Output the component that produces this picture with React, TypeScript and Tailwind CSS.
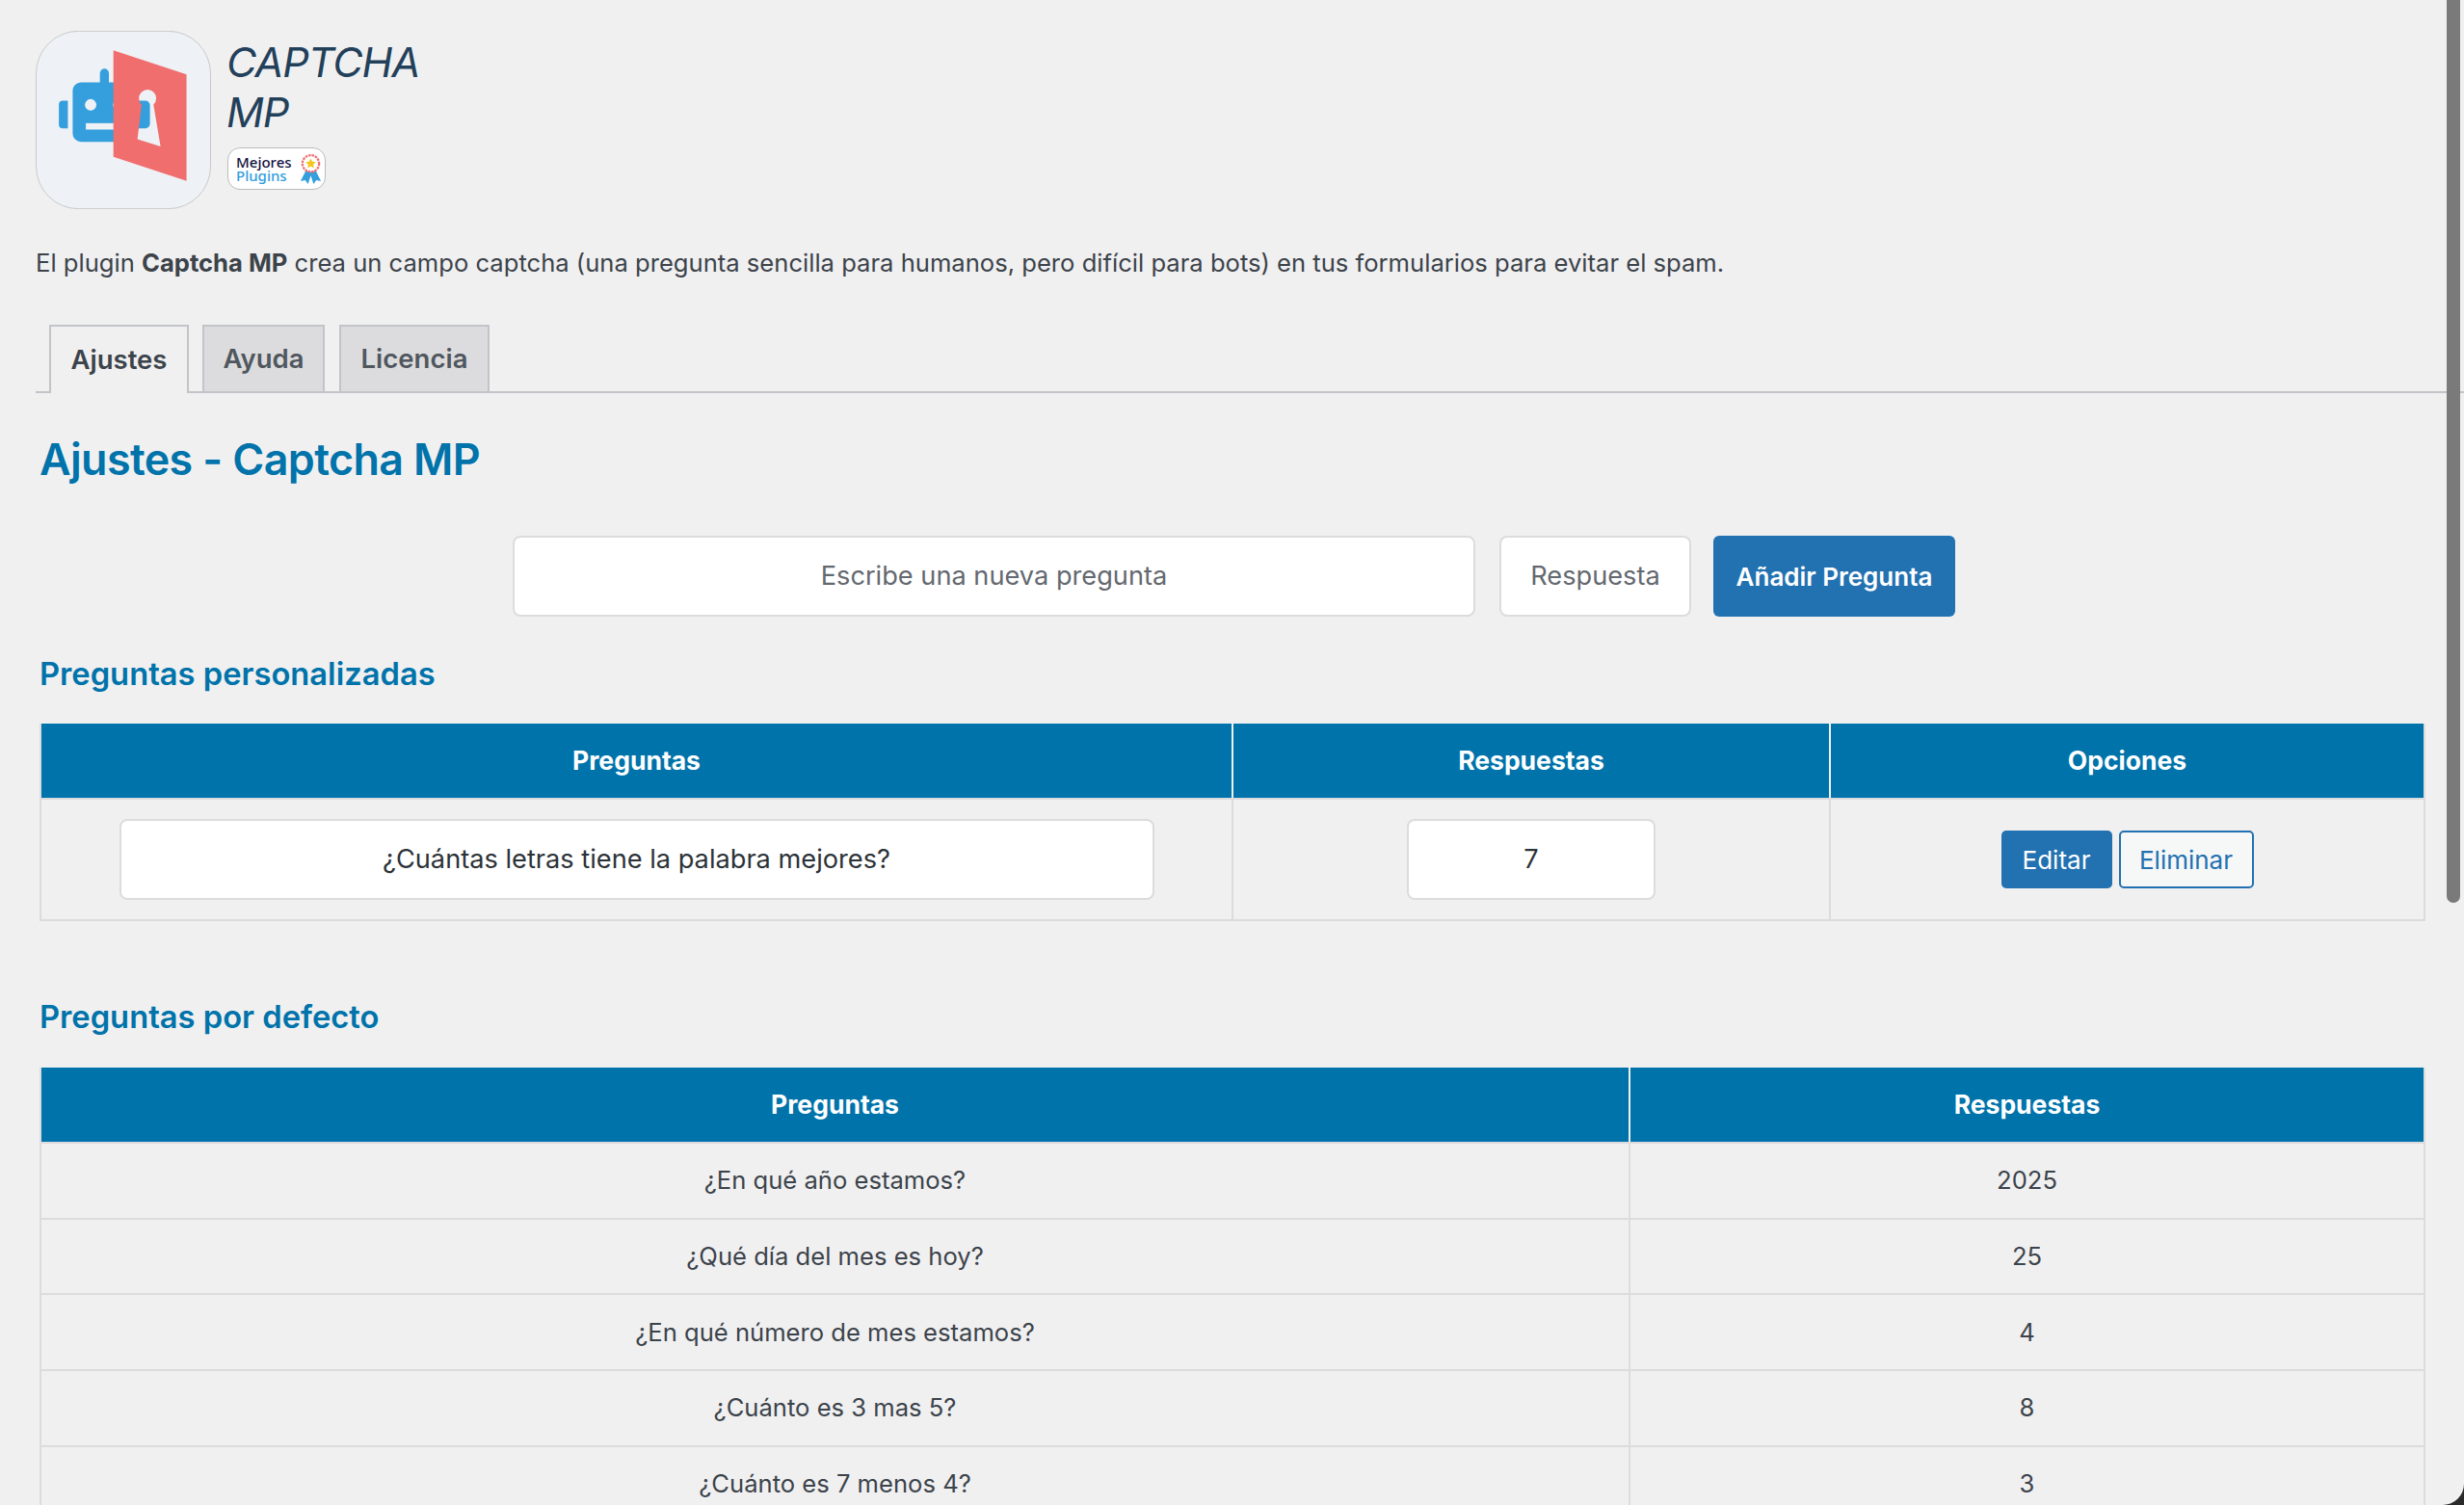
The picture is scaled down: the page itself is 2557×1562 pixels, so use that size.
const Logo = () => (
  <svg viewBox="22 22 546 556" className="w-[182px] h-[185px] shrink-0">
    <rect x="23" y="23" width="544" height="554" rx="132" fill="#eef1f5" stroke="#b5b5b5" strokeWidth="2" />
    <rect x="222" y="140" width="28" height="70" rx="14" fill="#349fdc" />
    <path d="M122 240 H106 a12 12 0 0 0 -12 12 V314 a12 12 0 0 0 12 12 H122 Z" fill="#349fdc" />
    <path d="M340 240 H364 a14 14 0 0 1 14 14 V312 a14 14 0 0 1 -14 14 H340 Z" fill="#349fdc" />
    <rect x="137" y="183" width="190" height="185" rx="26" fill="#349fdc" />
    <circle cx="193" cy="253" r="18" fill="#eef1f5" />
    <circle cx="281" cy="253" r="18" fill="#eef1f5" />
    <rect x="178" y="310" width="120" height="20" fill="#eef1f5" />
    <path
      fillRule="evenodd"
      d="M264 83 L492 158 V490 L264 415 Z M352 252 A27 27 0 1 1 389 252 L411 383 L339 360 Z"
      fill="#f06e6e"
    />
  </svg>
);

const Ribbon = () => (
  <svg viewBox="0 0 26 34" className="w-[25px] h-[33px] shrink-0">
    <path d="M8 18 L2 30 L7 29 L10 33 L13 24 L16 33 L19 29 L24 30 L18 18 Z" fill="#349fdc" />
    <circle cx="13" cy="11" r="9" fill="#fff" stroke="#f06e6e" strokeWidth="2.4" strokeDasharray="2.6 1" />
    <path d="M13 5.5 L14.7 9 L18.5 9.5 L15.7 12.1 L16.4 15.9 L13 14 L9.6 15.9 L10.3 12.1 L7.5 9.5 L11.3 9 Z" fill="#f5c518" />
  </svg>
);

const Tab = ({ label, active }: { label: string; active?: boolean }) => (
  <div
    className={
      active
        ? "w-[145px] h-[71px] -mb-[2px] border-2 border-b-0 border-[#c3c4c7] bg-[#f0f0f1] text-[#3c434a] flex items-center justify-center text-[27.5px] font-semibold leading-none"
        : "h-[71px] -mb-[2px] border-2 border-[#c3c4c7] bg-[#dcdcde] text-[#50575e] flex items-center justify-center text-[27.5px] font-semibold leading-none"
    }
  >
    {label}
  </div>
);

const Th = ({ children, className = "" }: { children: string; className?: string }) => (
  <div className={"bg-[#0073aa] text-white font-bold text-[26.5px] flex items-center justify-center h-[77px] " + className}>{children}</div>
);

const field =
  "bg-white border-2 border-[#dcdcde] rounded-[8px] h-[84px] flex items-center justify-center text-[27.2px] ";

const defaults = [
  ["¿En qué año estamos?", "2025"],
  ["¿Qué día del mes es hoy?", "25"],
  ["¿En qué número de mes estamos?", "4"],
  ["¿Cuánto es 3 mas 5?", "8"],
  ["¿Cuánto es 7 menos 4?", "3"],
];

export default function App() {
  return (
    <div className="bg-[#2a2a2a] w-[2557px] h-[1562px] overflow-hidden">
      <div className="relative bg-[#f0f0f1] w-full h-full rounded-br-[22px] overflow-hidden text-[#3c434a] font-['Inter',sans-serif]">
        <div className="absolute right-[4px] top-0 w-[14px] h-[937px] bg-[#7a7a7a] rounded-b-[7px]" />

        <div className="flex pl-[37px] pt-[32px] gap-[16px]">
          <Logo />
          <div className="flex flex-col pt-[6px]">
            <div className="italic text-[43px] leading-[52px] text-[#23405a] w-[220px] tracking-[-1px]">
              CAPTCHA
              <br />
              MP
            </div>
            <div className="mt-[11px] ml-[1px] w-[102px] h-[44px] bg-white border border-[#bcbcbc] rounded-[13px] flex items-center justify-between pl-[8px] pr-[2px]">
              <div className="flex flex-col font-['Noto_Sans',sans-serif] text-[15px] leading-[14px] font-medium">
                <span className="text-[#14123f]">Mejores</span>
                <span className="text-[#2f9de0]">Plugins</span>
              </div>
              <Ribbon />
            </div>
          </div>
        </div>

        <p className="ml-[37px] mt-[37px] text-[25.6px] leading-[38px] whitespace-nowrap">
          El plugin <b className="font-bold">Captcha MP</b> crea un campo captcha (una pregunta sencilla para humanos, pero difícil para bots) en tus formularios para evitar el spam.
        </p>

        <div className="mt-[44px] ml-[37px] h-[72px] border-b-2 border-[#c3c4c7] flex items-end pl-[14px]">
          <Tab label="Ajustes" active />
          <div className="w-[127px] ml-[14px]"><Tab label="Ayuda" /></div>
          <div className="w-[156px] ml-[15px]"><Tab label="Licencia" /></div>
        </div>

        <div className="pl-[41px] pr-[41px]">
          <h1 className="mt-[41px] text-[44.8px] leading-[56px] font-semibold text-[#0073aa] tracking-[-0.6px]">Ajustes - Captcha MP</h1>

          <div className="mt-[51px] flex">
            <div className={field + "ml-[491px] w-[999px] text-[#646970]"}>Escribe una nueva pregunta</div>
            <div className={field + "ml-[25px] w-[199px] text-[#646970]"}>Respuesta</div>
            <div className="ml-[23px] w-[251px] h-[84px] bg-[#2271b1] rounded-[6px] text-white font-semibold text-[26px] flex items-center justify-center">Añadir Pregunta</div>
          </div>

          <h2 className="mt-[39px] text-[32.7px] leading-[40px] font-semibold text-[#0073aa]">Preguntas personalizadas</h2>

          <div className="mt-[32px] w-[2476px] border-2 border-[#dcdcde] border-t-0">
            <div className="grid grid-cols-[1237px_620px_1fr]">
              <Th className="border-r-2 border-[#f0f0f1]">Preguntas</Th>
              <Th className="border-r-2 border-[#f0f0f1]">Respuestas</Th>
              <Th>Opciones</Th>
            </div>
            <div className="grid grid-cols-[1237px_620px_1fr] h-[126px] border-t-2 border-[#dcdcde]">
              <div className="border-r-2 border-[#dcdcde] flex items-center justify-center">
                <div className={field + "w-[1074px] text-[#2c3338]"}>¿Cuántas letras tiene la palabra mejores?</div>
              </div>
              <div className="border-r-2 border-[#dcdcde] flex items-center justify-center">
                <div className={field + "w-[258px] text-[#2c3338]"}>7</div>
              </div>
              <div className="flex items-center justify-center gap-[7px]">
                <div className="w-[115px] h-[60px] bg-[#2271b1] rounded-[5px] text-white text-[26px] flex items-center justify-center">Editar</div>
                <div className="w-[140px] h-[60px] bg-[#f6f7f7] border-2 border-[#2271b1] rounded-[5px] text-[#2271b1] text-[26px] flex items-center justify-center">Eliminar</div>
              </div>
            </div>
          </div>

          <h2 className="mt-[79px] text-[32.7px] leading-[40px] font-semibold text-[#0073aa]">Preguntas por defecto</h2>

          <div className="mt-[33px] w-[2476px] border-x-2 border-[#dcdcde]">
            <div className="grid grid-cols-[1649px_1fr]">
              <Th className="border-r-2 border-[#f0f0f1]">Preguntas</Th>
              <Th>Respuestas</Th>
            </div>
            {defaults.map(([q, a]) => (
              <div key={q} className="grid grid-cols-[1649px_1fr] h-[78.7px] border-t-2 border-[#dcdcde] text-[25.6px] text-[#3c434a]">
                <div className="border-r-2 border-[#dcdcde] flex items-center justify-center">{q}</div>
                <div className="flex items-center justify-center">{a}</div>
              </div>
            ))}
          </div>
        </div>
      </div>
    </div>
  );
}
